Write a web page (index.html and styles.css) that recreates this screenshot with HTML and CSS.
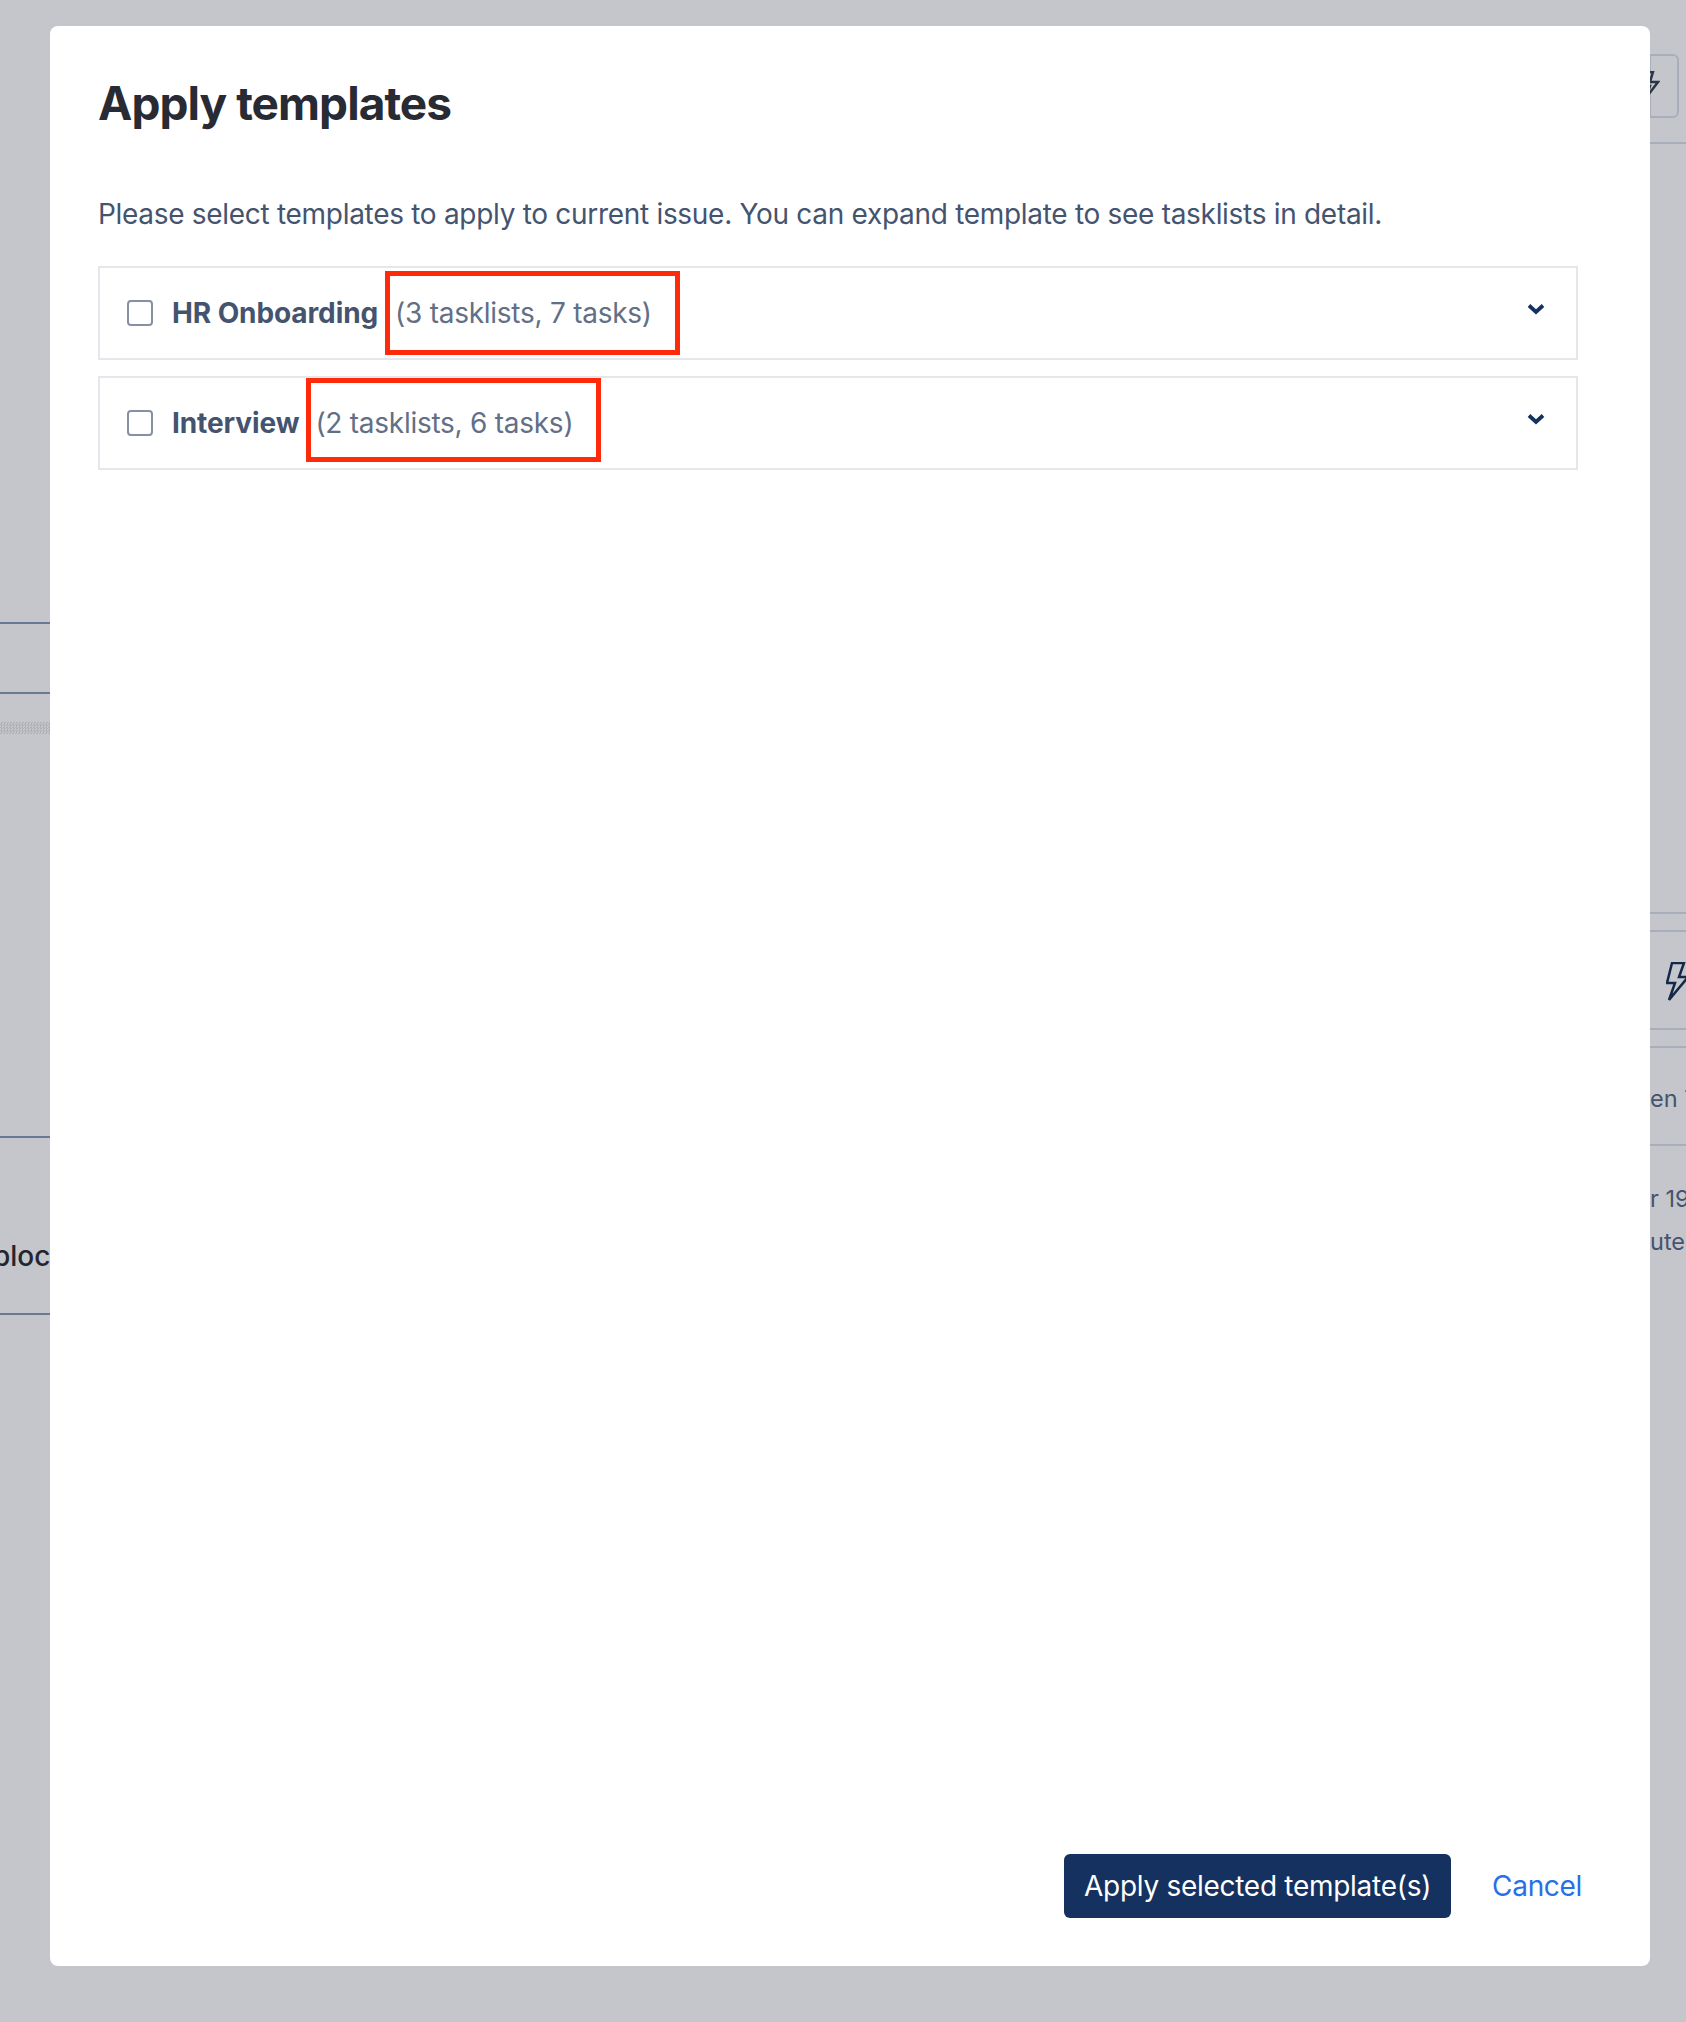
FILE: index.html
```html
<!DOCTYPE html>
<html lang="en">
<head>
    <meta charset="UTF-8">
    <meta name="viewport" content="width=device-width, initial-scale=1.0">
    <title>Apply templates</title>
    <link rel="stylesheet" href="styles.css">
</head>
<body>
    <div class="page">
        <div class="side side-left">
            <div class="rule rule-a"></div>
            <div class="rule rule-b"></div>
            <div class="band"></div>
            <div class="rule rule-c"></div>
            <div class="block-text">bloc</div>
            <div class="rule rule-d"></div>
        </div>

        <div class="modal">
            <h1>Apply templates</h1>
            <p class="intro">Please select templates to apply to current issue. You can expand template to see tasklists in detail.</p>

            <div class="template-row">
                <span class="checkbox"></span>
                <strong>HR Onboarding</strong>
                <span class="count">(3 tasklists, 7 tasks)</span>
                <span class="highlight highlight-first"></span>
                <svg class="chevron" width="18" height="12" viewBox="0 0 18 12"><path d="M2 2.500 9 9l7-6.500" fill="none" stroke="#14315f" stroke-width="3.800"/></svg>
            </div>
            <div class="template-row">
                <span class="checkbox"></span>
                <strong>Interview</strong>
                <span class="count count-tight">(2 tasklists, 6 tasks)</span>
                <span class="highlight highlight-second"></span>
                <svg class="chevron" width="18" height="12" viewBox="0 0 18 12"><path d="M2 2.500 9 9l7-6.500" fill="none" stroke="#14315f" stroke-width="3.800"/></svg>
            </div>

            <div class="actions">
                <button class="btn-apply">Apply selected template(s)</button>
                <a class="link-cancel" href="#">Cancel</a>
            </div>
        </div>

        <div class="side side-right">
            <div class="bolt-button">
                <svg width="20" height="30" viewBox="0 0 20 30"><path d="M7 1 2 15h8L5 28 18 11h-8l3-10z" fill="none" stroke="#2b3547" stroke-width="2.500"/></svg>
            </div>
            <div class="line line-top"></div>
            <div class="line line-a"></div>
            <div class="line line-b"></div>
            <svg class="bolt" width="24" height="40" viewBox="0 0 24 40"><path d="M6 1 1 21h8L3 38 22 15H13l5-14z" fill="none" stroke="#14284a" stroke-width="2.500"/></svg>
            <div class="line line-c"></div>
            <div class="line line-d"></div>
            <div class="side-text side-text-en">en T</div>
            <div class="line line-e"></div>
            <div class="side-text side-text-date">r 19</div>
            <div class="side-text side-text-ute">ute</div>
        </div>
    </div>
</body>
</html>
```

FILE: styles.css
```css
html, body {
    margin: 0;
    padding: 0;
}
body {
    background-color: #c5c6cb;
    font-family: Inter, "Open Sans", sans-serif;
    color: #44546f;
}
.page {
    display: grid;
    grid-template-columns: 50px 1600px 36px;
    height: 2022px;
    overflow: hidden;
}
.side {
    overflow: hidden;
    height: 2022px;
}
.rule {
    height: 2px;
    background-color: #6b7a94;
}
.rule-a {
    margin-top: 622px;
}
.rule-b {
    margin-top: 68px;
}
.band {
    height: 12px;
    margin-top: 28px;
    background: repeating-conic-gradient(#b0b2b8 0 25%, #c5c6cb 0 50%) 0 0 / 3px 3px;
}
.rule-c {
    margin-top: 402px;
}
.block-text {
    margin-top: 96px;
    margin-left: -7px;
    height: 44px;
    font-size: 28px;
    line-height: 44px;
    font-weight: 500;
    color: #22262f;
    white-space: nowrap;
}
.rule-d {
    margin-top: 35px;
}

.modal {
    position: relative;
    box-sizing: border-box;
    height: 1940px;
    margin-top: 26px;
    padding: 0 72px 0 48px;
    background-color: #fff;
    border-radius: 8px;
}
h1 {
    margin: 51px 0 0;
    font-size: 46px;
    line-height: 52px;
    font-weight: 700;
    letter-spacing: -0.95px;
    color: #282b33;
}
.intro {
    margin: 65px 0 0;
    font-size: 28px;
    line-height: 40px;
    letter-spacing: -0.3px;
    color: #44546f;
}
.template-row {
    position: relative;
    display: flex;
    align-items: center;
    box-sizing: border-box;
    height: 94px;
    margin-top: 16px;
    padding: 0 30px 0 27px;
    border: 2px solid #e6e7ec;
    font-size: 28px;
    letter-spacing: -0.26px;
}
.intro + .template-row {
    margin-top: 32px;
}
.checkbox {
    box-sizing: border-box;
    width: 26px;
    height: 26px;
    margin-right: 19px;
    border: 2px solid #8590a2;
    border-radius: 4px;
}
.template-row strong {
    font-weight: 700;
    letter-spacing: -0.1px;
    color: #44546f;
}
.count {
    margin-left: 17px;
    color: #626f86;
}
.count-tight {
    margin-left: 16px;
}
.highlight {
    position: absolute;
    box-sizing: border-box;
    width: 295px;
    height: 84px;
    border: 5px solid #ff2a0a;
}
.highlight-first {
    left: 285px;
    top: 3px;
}
.highlight-second {
    left: 206px;
    top: 0;
}
.chevron {
    margin-left: auto;
    margin-right: 1px;
    margin-top: -8px;
}

.actions {
    position: absolute;
    right: 68px;
    bottom: 48px;
    display: flex;
    align-items: center;
    gap: 41px;
}
.btn-apply {
    height: 64px;
    padding: 0 20px;
    background-color: #14315f;
    color: #fff;
    border: none;
    border-radius: 6px;
    font-family: inherit;
    font-size: 28px;
    letter-spacing: -0.28px;
    cursor: pointer;
}
.link-cancel {
    color: #2670e8;
    font-size: 28px;
    letter-spacing: -0.32px;
    text-decoration: none;
}

.bolt-button {
    display: flex;
    align-items: center;
    box-sizing: border-box;
    width: 30px;
    height: 64px;
    margin-top: 54px;
    margin-left: -1px;
    border: 2px solid #a9afba;
    border-radius: 0 6px 6px 0;
}
.bolt-button svg {
    margin-left: -11px;
}
.line {
    height: 2px;
    background-color: #a9afba;
}
.line-top {
    margin-top: 24px;
}
.line-a {
    margin-top: 768px;
}
.line-b {
    margin-top: 16px;
}
.bolt {
    display: block;
    margin-top: 30px;
    margin-left: 16px;
}
.line-c {
    margin-top: 26px;
}
.line-d {
    margin-top: 16px;
}
.side-text {
    font-size: 23.5px;
    line-height: 34px;
    white-space: nowrap;
    color: #44546f;
}
.side-text-en {
    margin-top: 34px;
}
.line-e {
    margin-top: 28px;
}
.side-text-date {
    margin-top: 36px;
}
.side-text-ute {
    margin-top: 9px;
}
```
